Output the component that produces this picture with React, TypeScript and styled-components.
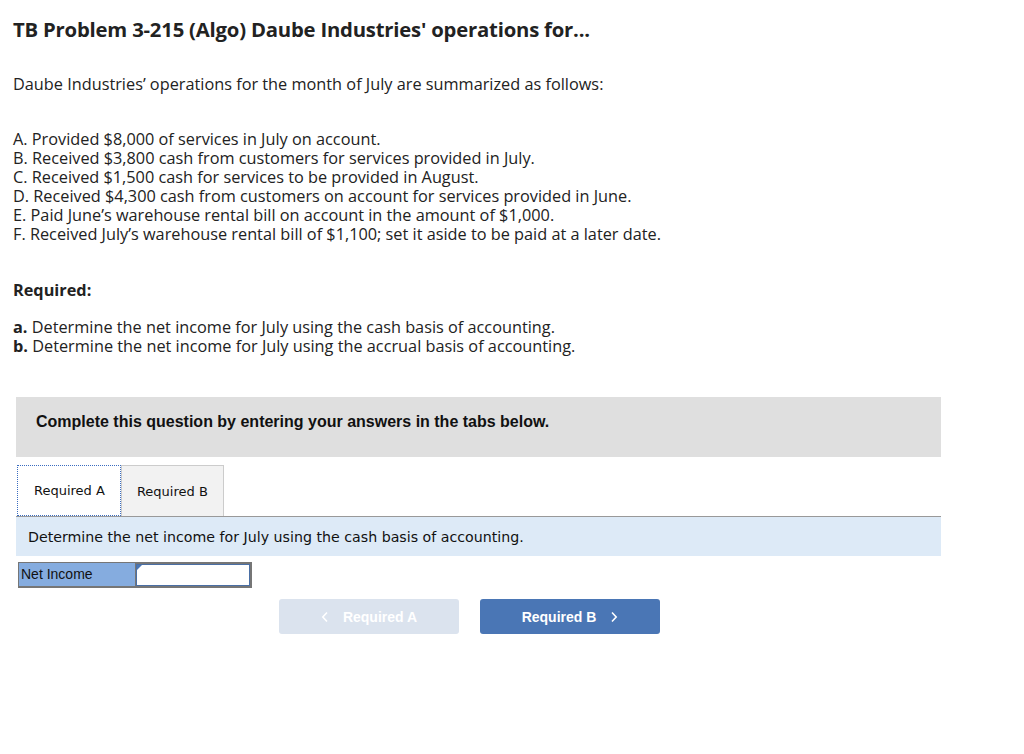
import * as React from 'react';
import styled, { createGlobalStyle } from 'styled-components';

const GlobalStyle = createGlobalStyle`
  body {
    margin: 0;
    background: #fff;
    color: #222;
    font-family: "Open Sans", Lato, sans-serif;
  }
`;

const Page = styled.div`
  width: 1024px;
  padding: 16px 0 0 13px;
  box-sizing: border-box;
`;

const Title = styled.h1`
  margin: 0;
  font-size: 20.3px;
  font-weight: 700;
  line-height: 26px;
  letter-spacing: -0.2px;
  color: #222;
`;

const Para = styled.p`
  margin: 33px 0 0;
  font-size: 16.3px;
  line-height: 19px;
`;

const List = styled.div`
  margin-top: 36px;
  font-size: 16.3px;
  line-height: 19px;
`;

const Required = styled.div`
  margin-top: 37px;
  font-size: 16.3px;
  font-weight: 700;
  line-height: 19px;
`;

const Parts = styled.div`
  margin-top: 18px;
  font-size: 16.3px;
  line-height: 19px;

  b {
    font-weight: 700;
  }
`;

const Work = styled.div`
  margin: 41px 0 0 3px;
  width: 925px;
`;

const Banner = styled.div`
  height: 60px;
  background: #dfdfdf;
  display: flex;
  align-items: center;
  padding: 0 20px 10px;
  box-sizing: border-box;
  font-family: "Liberation Sans", Arial, sans-serif;
  font-weight: 700;
  font-size: 16px;
  color: #111;
`;

const Tabs = styled.div`
  display: flex;
  margin-top: 8px;
  border-bottom: 1px solid #999;
`;

const Tab = styled.div<{ $active?: boolean }>`
  height: 51px;
  box-sizing: border-box;
  display: flex;
  align-items: center;
  padding: 0 15px 0 ${(p) => (p.$active ? 16 : 15)}px;
  font-family: "DejaVu Sans", Verdana, sans-serif;
  font-size: 13px;
  color: #111;
  background: ${(p) => (p.$active ? '#fff' : '#f2f2f2')};
  border: ${(p) => (p.$active ? '1px dotted #3a6cc0' : '1px solid #ccc')};
  border-bottom: ${(p) => (p.$active ? '1px dotted #3a6cc0' : 'none')};
  margin-bottom: ${(p) => (p.$active ? '-1px' : '0')};
  margin-left: ${(p) => (p.$active ? '1px' : '0')};
`;

const Instruction = styled.div`
  height: 39px;
  background: #ddeaf7;
  display: flex;
  align-items: center;
  padding-left: 12px;
  font-family: "DejaVu Sans", Verdana, sans-serif;
  font-size: 14.2px;
  color: #111;
`;

const AnswerRow = styled.div`
  display: flex;
  margin: 6px 0 0 2px;
`;

const Label = styled.div`
  width: 117px;
  height: 26px;
  box-sizing: border-box;
  background: #85acdf;
  border: 1px solid #767676;
  border-right: none;
  border-bottom-width: 2px;
  padding: 3px 0 0 2px;
  font-family: "Liberation Sans", Arial, sans-serif;
  font-size: 14px;
  color: #111;
`;

const InputCell = styled.div`
  position: relative;
  width: 117px;
  height: 26px;
  box-sizing: border-box;
  border: 2px solid #767676;
  border-left-width: 1px;
  background: #fff;
`;

const Input = styled.input`
  display: block;
  width: 100%;
  height: 100%;
  box-sizing: border-box;
  border: 1px solid #4a6fa5;
  outline: none;
  margin: 0;
  padding: 0 4px;
`;

const Flag = styled.span`
  position: absolute;
  left: 1px;
  top: 1px;
  width: 0;
  height: 0;
  border-top: 5px solid #4a76b5;
  border-right: 5px solid transparent;
`;

const Nav = styled.div`
  display: flex;
  gap: 21px;
  margin: 11px 0 0 263px;
`;

const NavButton = styled.button<{ $disabled?: boolean }>`
  width: 180px;
  height: 35px;
  border: none;
  border-radius: 3px;
  background: ${(p) => (p.$disabled ? '#dbe3ee' : '#4a76b5')};
  color: #fff;
  font-family: "Liberation Sans", Arial, sans-serif;
  font-weight: 700;
  font-size: 14px;
  display: flex;
  align-items: center;
  justify-content: center;
  gap: 14px;
  padding: 0;
  cursor: ${(p) => (p.$disabled ? 'default' : 'pointer')};
`;

const Chevron = ({ left }: { left?: boolean }) => (
  <svg width="8" height="12" viewBox="0 0 8 12" fill="none">
    <path
      d={left ? 'M6 1.5 L1.8 6 L6 10.5' : 'M2 1.5 L6.2 6 L2 10.5'}
      stroke="#fff"
      strokeWidth="1.6"
    />
  </svg>
);

const items = [
  'A. Provided $8,000 of services in July on account.',
  'B. Received $3,800 cash from customers for services provided in July.',
  'C. Received $1,500 cash for services to be provided in August.',
  'D. Received $4,300 cash from customers on account for services provided in June.',
  'E. Paid June\u2019s warehouse rental bill on account in the amount of $1,000.',
  'F. Received July\u2019s warehouse rental bill of $1,100; set it aside to be paid at a later date.',
];

export default function App() {
  return (
    <Page>
      <GlobalStyle />
      <Title>TB Problem 3-215 (Algo) Daube Industries' operations for...</Title>
      <Para>Daube Industries’ operations for the month of July are summarized as follows:</Para>
      <List>
        {items.map((t) => (
          <div key={t}>{t}</div>
        ))}
      </List>
      <Required>Required:</Required>
      <Parts>
        <div>
          <b>a.</b> Determine the net income for July using the cash basis of accounting.
        </div>
        <div>
          <b>b.</b> Determine the net income for July using the accrual basis of accounting.
        </div>
      </Parts>
      <Work>
        <Banner>Complete this question by entering your answers in the tabs below.</Banner>
        <Tabs>
          <Tab $active>Required A</Tab>
          <Tab>Required B</Tab>
        </Tabs>
        <Instruction>Determine the net income for July using the cash basis of accounting.</Instruction>
        <AnswerRow>
          <Label>Net Income</Label>
          <InputCell>
            <Input aria-label="Net Income" />
            <Flag />
          </InputCell>
        </AnswerRow>
        <Nav>
          <NavButton $disabled>
            <Chevron left />
            Required A
          </NavButton>
          <NavButton>
            Required B
            <Chevron />
          </NavButton>
        </Nav>
      </Work>
    </Page>
  );
}
